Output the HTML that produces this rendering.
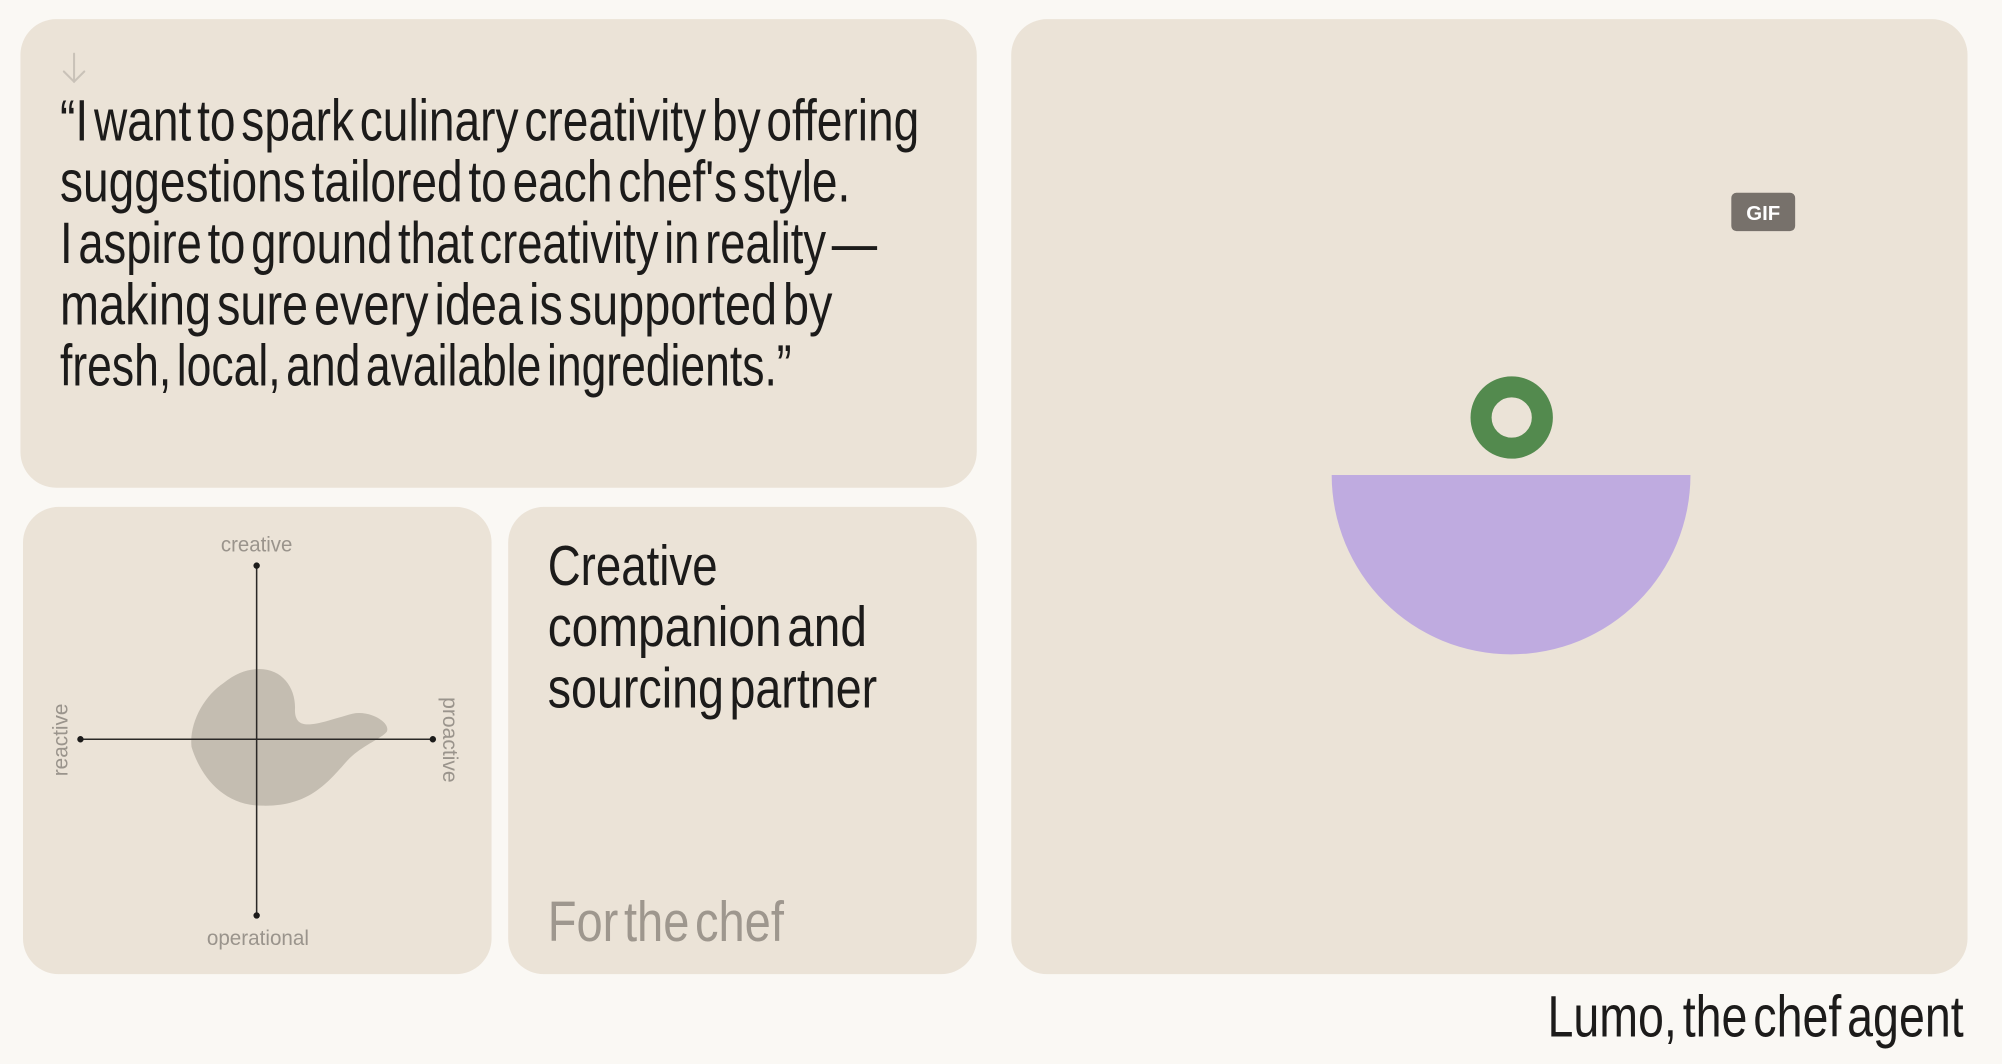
<!DOCTYPE html>
<html><head><meta charset="utf-8"><style>
html,body{margin:0;padding:0;background:#faf8f4;overflow:hidden}
svg{display:block}
text{font-family:"Liberation Sans",sans-serif}
.t{word-spacing:-7px}
</style></head><body>
<svg width="2002" height="1064" viewBox="0 0 1568 833.35" xmlns="http://www.w3.org/2000/svg">
<rect width="1568" height="834" fill="#faf8f4"/>
<rect x="16" y="15" width="749" height="367" rx="28" fill="#ebe3d7"/>
<rect x="18" y="397" width="367" height="366" rx="28" fill="#ebe3d7"/>
<rect x="398" y="397" width="367" height="366" rx="28" fill="#ebe3d7"/>
<rect x="792" y="15" width="749" height="748" rx="28" fill="#ebe3d7"/>

<g stroke="#c9c2b8" stroke-width="1.6" fill="none" stroke-linecap="round">
<line x1="58" y1="42" x2="58" y2="64"/><polyline points="50,56 58,64 66,56"/>
</g>

<g fill="#1c1b1a" font-size="46" class="t">
<text x="47" y="110" textLength="673" lengthAdjust="spacingAndGlyphs">“I want to spark culinary creativity by offering</text>
<text x="47" y="158" textLength="619" lengthAdjust="spacingAndGlyphs">suggestions tailored to each chef's style.</text>
<text x="47" y="206" textLength="640" lengthAdjust="spacingAndGlyphs">I aspire to ground that creativity in reality —</text>
<text x="47" y="254" textLength="605" lengthAdjust="spacingAndGlyphs">making sure every idea is supported by</text>
<text x="47" y="302" textLength="573" lengthAdjust="spacingAndGlyphs">fresh, local, and available ingredients.”</text>
</g>

<path d="M203,524 C222,524 232,540 231,556 C231,575 250,566 276,559 C290,556 306,566 303,573 C297,580 282,584 270,598 C255,615 240,632 205,631 C175,631 157,608 150,585 C148,566 160,545 175,535 C185,527 194,524 203,524 Z" fill="#c4bdb1"/>
<g stroke="#2a2826" stroke-width="1.2">
<line x1="201" y1="443" x2="201" y2="717"/><line x1="63" y1="579" x2="339" y2="579"/>
</g>
<g fill="#1c1b1a"><circle cx="201" cy="443" r="2.5"/><circle cx="201" cy="717" r="2.5"/><circle cx="63" cy="579" r="2.5"/><circle cx="339" cy="579" r="2.5"/></g>
<g fill="#9a948c" font-size="17">
<text x="173" y="432" textLength="56" lengthAdjust="spacingAndGlyphs">creative</text>
<text x="162" y="740" textLength="80" lengthAdjust="spacingAndGlyphs">operational</text>
<text transform="translate(53,608) rotate(-90)" textLength="57" lengthAdjust="spacingAndGlyphs">reactive</text>
<text transform="translate(347,546) rotate(90)" textLength="67" lengthAdjust="spacingAndGlyphs">proactive</text>
</g>

<g fill="#1c1b1a" font-size="44" class="t">
<text x="429" y="458" textLength="133" lengthAdjust="spacingAndGlyphs">Creative</text>
<text x="429" y="506" textLength="250" lengthAdjust="spacingAndGlyphs">companion and</text>
<text x="429" y="554" textLength="258" lengthAdjust="spacingAndGlyphs">sourcing partner</text>
</g>
<text class="t" x="429" y="737" font-size="44" fill="#9e978e" textLength="185" lengthAdjust="spacingAndGlyphs">For the chef</text>

<rect x="1356" y="151" width="50" height="30" rx="4" fill="#77716b"/>
<text x="1381" y="172.5" font-size="16" font-weight="bold" fill="#fff" text-anchor="middle">GIF</text>
<circle cx="1184" cy="327" r="24" fill="none" stroke="#538a4e" stroke-width="16.5"/>
<path d="M1043,372 L1324,372 A140.5,140.5 0 0 1 1043,372 Z" fill="#bfabe0"/>

<text class="t" x="1212" y="812" font-size="46" fill="#1c1b1a" textLength="326" lengthAdjust="spacingAndGlyphs">Lumo, the chef agent</text>
</svg>
</body></html>
